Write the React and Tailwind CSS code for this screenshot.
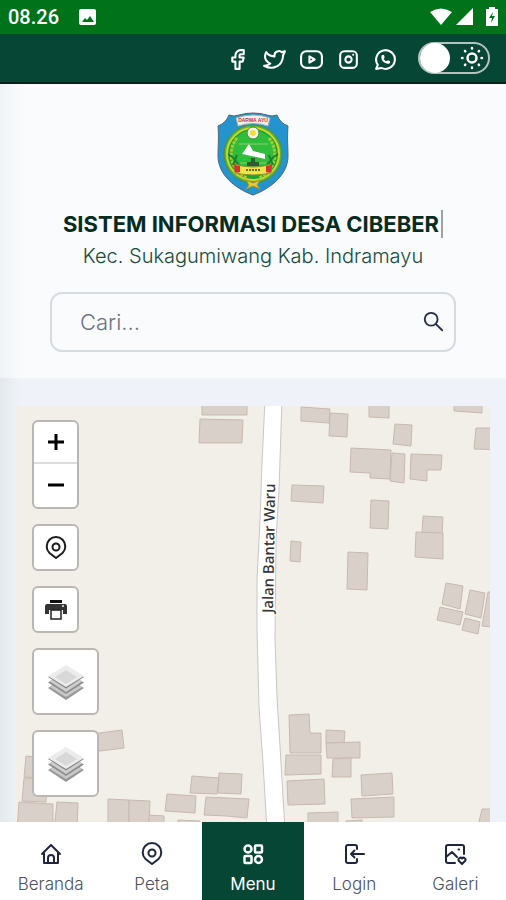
import React, { useState } from 'react';
import { TbBrandFacebook, TbBrandTwitter, TbBrandInstagram, TbBrandWhatsapp } from 'react-icons/tb';

const SOCIALS = [
  { name: 'Facebook', icon: TbBrandFacebook },
  { name: 'Twitter', icon: TbBrandTwitter },
  { name: 'YouTube', icon: YoutubeIcon },
  { name: 'Instagram', icon: TbBrandInstagram },
  { name: 'WhatsApp', icon: TbBrandWhatsapp },
];

const MENU = [
  { label: 'Beranda', icon: HomeIcon },
  { label: 'Peta', icon: PinIcon },
  { label: 'Menu', icon: GridIcon, active: true },
  { label: 'Login', icon: LoginIcon },
  { label: 'Galeri', icon: GalleryIcon },
];

// building outlines on the village map
const BUILDINGS = [
  '202,400 247,400 247,415 202,415',
  '200,419 243,420 242,443 199,443',
  '301,407 330,409 329,423 301,421',
  '330,413 348,414 347,437 329,436',
  '369,400 389,400 389,418 369,417',
  '454,400 482,400 482,413 454,411',
  '395,424 412,425 411,446 393,444',
  '476,428 500,428 500,450 474,449',
  '351,448 391,450 390,479 370,478 370,473 350,472',
  '392,453 405,454 404,483 390,481',
  '411,454 442,455 441,470 427,470 427,481 410,479',
  '292,485 324,486 323,503 291,501',
  '371,500 389,501 388,529 370,528',
  '291,541 301,542 300,562 290,561',
  '423,516 443,517 442,534 422,533',
  '416,532 443,533 443,559 415,557',
  '348,552 368,553 367,590 347,589',
  '446,583 463,586 460,609 442,604',
  '470,590 485,593 481,618 465,614',
  '440,607 463,612 460,625 437,620',
  '465,618 480,622 478,634 462,630',
  '488,592 500,592 500,628 482,626',
  '289,715 309,714 310,733 321,733 321,753 290,753',
  '286,755 321,755 321,774 285,775',
  '287,781 324,779 325,804 288,805',
  '326,730 345,731 344,743 326,743',
  '326,743 360,742 360,758 327,758',
  '333,759 351,758 351,777 332,777',
  '361,775 392,773 393,794 362,796',
  '351,799 394,797 394,817 352,818',
  '308,813 338,812 338,830 308,830',
  '346,821 362,820 362,830 346,830',
  '482,809 500,809 500,830 477,830',
  '92,734 122,730 124,748 92,752',
  '26,756 46,758 46,778 24,777',
  '24,778 47,779 46,802 22,801',
  '19,802 53,804 53,830 17,830',
  '57,802 78,803 77,830 54,830',
  '108,799 129,800 129,830 108,830',
  '129,800 150,801 149,830 129,830',
  '149,815 164,816 164,830 149,830',
  '167,794 196,796 195,813 165,811',
  '192,776 219,778 217,794 190,793',
  '219,773 242,774 241,794 218,793',
  '206,797 249,799 247,818 226,816 204,815',
  '178,820 200,821 200,830 178,830',
];

function Svg({ size = 24, children, ...props }) {
  return (
    <svg width={size} height={size} viewBox="0 0 24 24" fill="none" stroke="currentColor" strokeWidth="2" strokeLinecap="round" strokeLinejoin="round" aria-hidden="true" {...props}>
      {children}
    </svg>
  );
}

function YoutubeIcon(props) {
  return (
    <Svg {...props}>
      <rect x="2" y="4" width="20" height="16" rx="5" />
      <path d="M10 9v6l5-3z" />
    </Svg>
  );
}

function HomeIcon() {
  return (
    <Svg>
      <path d="M3 12 12 3l9 9M5 11v10h14V11" />
      <path d="M9 21v-5a3 3 0 0 1 6 0v5" />
    </Svg>
  );
}

function PinIcon() {
  return (
    <Svg>
      <path d="M12 22 5.500 17a9.300 9.300 0 1 1 13 0z" />
      <circle cx="12" cy="11" r="3.500" />
    </Svg>
  );
}

function GridIcon() {
  return (
    <Svg strokeWidth="2.500">
      <circle cx="7" cy="7" r="3.500" />
      <rect x="14" y="3.500" width="7" height="7" rx="1" />
      <rect x="3.500" y="14" width="7" height="7" rx="1" />
      <circle cx="17.500" cy="17.500" r="3.500" />
    </Svg>
  );
}

function LoginIcon() {
  return (
    <Svg>
      <path d="M15 7V5a2 2 0 0 0-2-2H6a2 2 0 0 0-2 2v14a2 2 0 0 0 2 2h7a2 2 0 0 0 2-2v-2" />
      <path d="M22 12H10M12.500 8.500 9 12l3.500 3.500" />
    </Svg>
  );
}

function GalleryIcon() {
  return (
    <Svg>
      <path d="M21 12V5a2 2 0 0 0-2-2H5a2 2 0 0 0-2 2v14a2 2 0 0 0 2 2h7" />
      <path d="m3 15 6-5 5 5M15.500 7.500h.500" />
      <path d="m19 22-3-3a1.800 1.800 0 0 1 3-2.500 1.800 1.800 0 0 1 3 2.500z" />
    </Svg>
  );
}

function PrinterIcon() {
  return (
    <svg width="24" height="22" viewBox="0 0 24 22" aria-hidden="true">
      <path d="M6 1h12v3H6z" fill="#111" />
      <path d="M3 5h18a2 2 0 0 1 2 2v8h-4v-4H5v4H1V7a2 2 0 0 1 2-2z" fill="#333" />
      <path d="M7 11h10v9H7z" fill="#fff" stroke="#222" strokeWidth="1.500" />
      <path d="M18 7h2" stroke="#eee" strokeWidth="1.500" />
    </svg>
  );
}

function LayersIcon() {
  return (
    <svg width="38" height="36" viewBox="0 0 38 36" aria-hidden="true">
      <path d="M1 24 19 13l18 11-18 12z" fill="#999" />
      <path d="M3 23 19 13l16 10-16 10z" fill="#c9c9c9" />
      <path d="M1 18.500 19 8l18 10.500L19 30z" fill="#8e8e8e" />
      <path d="M3 17.500 19 8l16 9.500L19 28z" fill="#cfcfcf" />
      <path d="M1 13 19 3l18 10-18 11.500z" fill="#858585" />
      <path d="M1 12 19 1l18 11-18 11z" fill="#ececec" />
      <path d="M8 13 19 6l11 7-11 7z" fill="#d8d8d8" />
    </svg>
  );
}

function Emblem() {
  return (
    <svg className="h-[84px] w-[72px]" viewBox="0 0 72 84" role="img" aria-label="Lambang Kabupaten Indramayu">
      <path d="M1 14Q9 11 12 3q5 2 10 0 14-4 28 0 5 2 10 0 3 8 11 11c-1 12 0 20 0 30 0 18-16 32-35 39C17 76 1 62 1 44c0-10 1-18 0-30z" fill="#2494cf" stroke="#4f6672" />
      <circle cx="36" cy="42" r="29" fill="#55b534" stroke="#5a8a34" />
      <circle cx="36" cy="42" r="26" fill="#1da336" stroke="#cfd62f" strokeWidth="2" />
      <circle cx="36" cy="40" r="22" fill="#2fbd3b" />
      <path d="M20 26C9 40 14 58 30 66M52 26c11 14 6 32-10 40" fill="none" stroke="#a9cb31" strokeWidth="3" strokeDasharray="3 1" />
      <path d="M11 42q7 4 11 12M61 42q-7 4-11 12M20 43l-4 10M52 43l4 10" fill="none" stroke="#15802d" strokeWidth="2" />
      <path d="M19 6q17-6 34 0l-2 8q-15-5-30 0z" fill="#f7eee9" stroke="#a4adb0" />
      <text x="36" y="10" textAnchor="middle" fontFamily="Liberation Sans" fontWeight="700" fontSize="5" fill="#bc3540">DARMA AYU</text>
      <circle cx="36" cy="21" r="6" fill="#f5f6e6" stroke="#3f8a35" />
      <circle cx="36" cy="21" r="3" fill="#f2df3b" />
      <path d="M22 32h29M23 51h26" stroke="#86d36b" />
      <path d="m32 32 4 7 12 3v5L25 42z" fill="#fff" />
      <path d="M34 46h4v4h4v4H30v-4h4z" fill="#315b33" />
      <path d="M17 52q19 6 38 0l-1 9q-18 4-36 0z" fill="#f0e34b" stroke="#8b8b2e" />
      <path d="M17 52q3 2 6 2v6q-3 1-5 0zM55 52q-3 2-6 2v6q3 1 5 0z" fill="#d43132" />
      <path d="M29 58h15" stroke="#69712a" strokeWidth="2" strokeDasharray="2 1" />
      <path d="m29 68 7 3 7-3-3 5 3 4-7-3-7 3 3-4z" fill="#e3ce2c" stroke="#a69229" />
    </svg>
  );
}

const StatusBar = () => (
  <div className="flex h-[34px] items-center justify-between bg-[#00721a] px-2 text-white">
    <div className="flex items-center gap-5">
      <span className="font-[Roboto,sans-serif] text-[20px] font-medium">08.26</span>
      <svg width="18" height="18" viewBox="0 0 18 18" aria-hidden="true">
        <rect x="0" y="1" width="17" height="16" rx="2" fill="#fff" />
        <path d="m3 14 3-4 2 2 3-4 4 6z" fill="#00721a" />
      </svg>
    </div>
    <div className="flex items-center gap-1">
      <svg width="22" height="18" viewBox="0 0 22 18" fill="#fff" aria-hidden="true"><path d="M0 4q11-7 22 0L11 17z" /></svg>
      <svg width="18" height="18" viewBox="0 0 18 18" fill="#fff" aria-hidden="true"><path d="M17 0v17H0z" /></svg>
      <svg className="ml-2" width="12" height="20" viewBox="0 0 12 20" aria-hidden="true">
        <path d="M3 0h6v2h3v17H0V2h3z" fill="#fff" />
        <path d="m7 5-4 6h3l-1 5 4-7H6z" fill="#00721a" />
      </svg>
    </div>
  </div>
);

const TopBar = () => {
  const [dark, setDark] = useState(false);
  return (
    <div className="flex h-[50px] items-center justify-end gap-5 border-b-2 border-[#0a1f19] bg-[#064635] pr-4 text-white">
      <div className="flex items-center gap-3 pt-[2px]">
        {SOCIALS.map(({ name, icon: Icon }) => (
          <a key={name} href={`#${name.toLowerCase()}`} aria-label={name}>
            <Icon size={25} />
          </a>
        ))}
      </div>
      <button
        role="switch"
        aria-checked={dark}
        aria-label="Mode gelap"
        onClick={() => setDark(!dark)}
        className="flex h-8 w-[72px] items-center justify-between rounded-full border-2 border-[#b5c3bf] pr-1"
      >
        <span className="h-[30px] w-[30px] rounded-full bg-white" />
        <svg width="24" height="24" viewBox="0 0 24 24" fill="none" stroke="currentColor" strokeWidth="2.500" strokeLinecap="round" aria-hidden="true">
          <circle cx="12" cy="12" r="4.500" />
          <path d="M12 2v.5M12 21.500v.5M2 12h.5M21.500 12h.5M5 5l.3.3M18.700 18.700l.3.3M5 19l.3-.3M18.700 5.300l.3-.3" />
        </svg>
      </button>
    </div>
  );
};

const Header = () => (
  <header className="flex flex-col items-center bg-linear-to-r from-[#f0f3f6] to-[#f9fbfd] to-4% px-[50px] pt-7 pb-[26px]">
    <Emblem />
    <h1 className="mt-[14px] flex items-center gap-[2px] text-[22px] leading-7 font-bold whitespace-nowrap text-[#062b20]">
      SISTEM INFORMASI DESA CIBEBER
      <span className="h-7 w-[2px] bg-[#9aa5a3]" />
    </h1>
    <p className="mt-1 text-[20px] leading-7 font-light whitespace-nowrap text-[#164b3b]">Kec. Sukagumiwang Kab. Indramayu</p>
    <form role="search" onSubmit={(e) => e.preventDefault()} className="mt-[22px] flex h-[60px] w-full items-center rounded-xl border-2 border-[#d6dbe2] pr-[10px] pl-7">
      <input type="search" aria-label="Cari" placeholder="Cari..." className="min-w-0 flex-1 bg-transparent text-[22px] font-light outline-none placeholder:text-[#6c7280]" />
      <button aria-label="Cari" className="text-[#252b43]">
        <Svg size={22}>
          <circle cx="10" cy="9" r="7" />
          <path d="m15 14 7 7" />
        </Svg>
      </button>
    </form>
  </header>
);

const MapButton = ({ label, large, children }) => (
  <button
    aria-label={label}
    className={`flex items-center justify-center rounded-md border-2 border-[#bab7b3] bg-white text-[#1b1b1b] ${large ? 'h-[67px] w-[67px]' : 'h-[47px] w-[47px]'}`}
  >
    {children}
  </button>
);

const VillageMap = () => (
  <section aria-label="Peta desa" className="relative flex-1 overflow-hidden bg-[#f2efe9]">
    {/* Roads and buildings */}
    <svg className="absolute inset-0 h-full w-full" viewBox="16 406 474 416" preserveAspectRatio="xMidYMin slice" aria-hidden="true">
      <path d="M265 400 262 463 260 520 257 580 257 630 259 707 263 763 267 830H285L281 763 277 697 275 640 276 540 279 490 282 400Z" fill="#fff" stroke="#c9c7c4" />
      {BUILDINGS.map((points) => (
        <polygon key={points} points={points} fill="#d9d0c9" stroke="#c7b9af" />
      ))}
      <text transform="translate(273 613) rotate(-89)" fontFamily="Noto Sans, sans-serif" fontSize="15" fontWeight="500" fill="#333" stroke="#fff" strokeWidth="2" paintOrder="stroke">
        Jalan Bantar Waru
      </text>
    </svg>

    {/* Controls */}
    <div className="relative flex flex-col items-start gap-[15px] px-4 pt-[14px] pb-6">
      <div className="flex w-[47px] flex-col rounded-md border-2 border-[#bab7b3] bg-white text-black">
        <button aria-label="Perbesar" className="flex h-[42px] items-center justify-center border-b-2 border-[#ddd]">
          <svg width="16" height="16" viewBox="0 0 16 16" stroke="currentColor" strokeWidth="3" aria-hidden="true"><path d="M8 0v16M0 8h16" /></svg>
        </button>
        <button aria-label="Perkecil" className="flex h-[43px] items-center justify-center">
          <svg width="16" height="16" viewBox="0 0 16 16" stroke="currentColor" strokeWidth="3" aria-hidden="true"><path d="M0 7h16" /></svg>
        </button>
      </div>
      <MapButton label="Lokasi saya"><PinIcon /></MapButton>
      <MapButton label="Cetak peta"><PrinterIcon /></MapButton>
      <MapButton label="Lapisan dasar" large><LayersIcon /></MapButton>
      <MapButton label="Lapisan wilayah" large><LayersIcon /></MapButton>
    </div>
  </section>
);

const BottomNav = () => (
  <nav className="sticky bottom-0 grid grid-cols-5 bg-white">
    {MENU.map(({ label, icon: Icon, active }) => (
      <a
        key={label}
        href={`#${label.toLowerCase()}`}
        className={`flex h-[78px] flex-col items-center gap-[6px] pt-5 ${active ? 'bg-[#064635] text-white' : 'text-[#20253f]'}`}
      >
        <Icon />
        <span className={`text-[17px] leading-6 ${active ? '' : 'font-light text-[#4b5060]'}`}>{label}</span>
      </a>
    ))}
  </nav>
);

export default function App() {
  return (
    <div className="flex min-h-screen flex-col bg-[#eff3f9] font-[Inter,sans-serif]">
      <StatusBar />
      <TopBar />
      <Header />
      <main className="flex flex-1 flex-col bg-linear-to-r from-[#e4e9ed] to-[#eff3f9] to-4% px-4 pt-7">
        <VillageMap />
      </main>
      <BottomNav />
    </div>
  );
}
